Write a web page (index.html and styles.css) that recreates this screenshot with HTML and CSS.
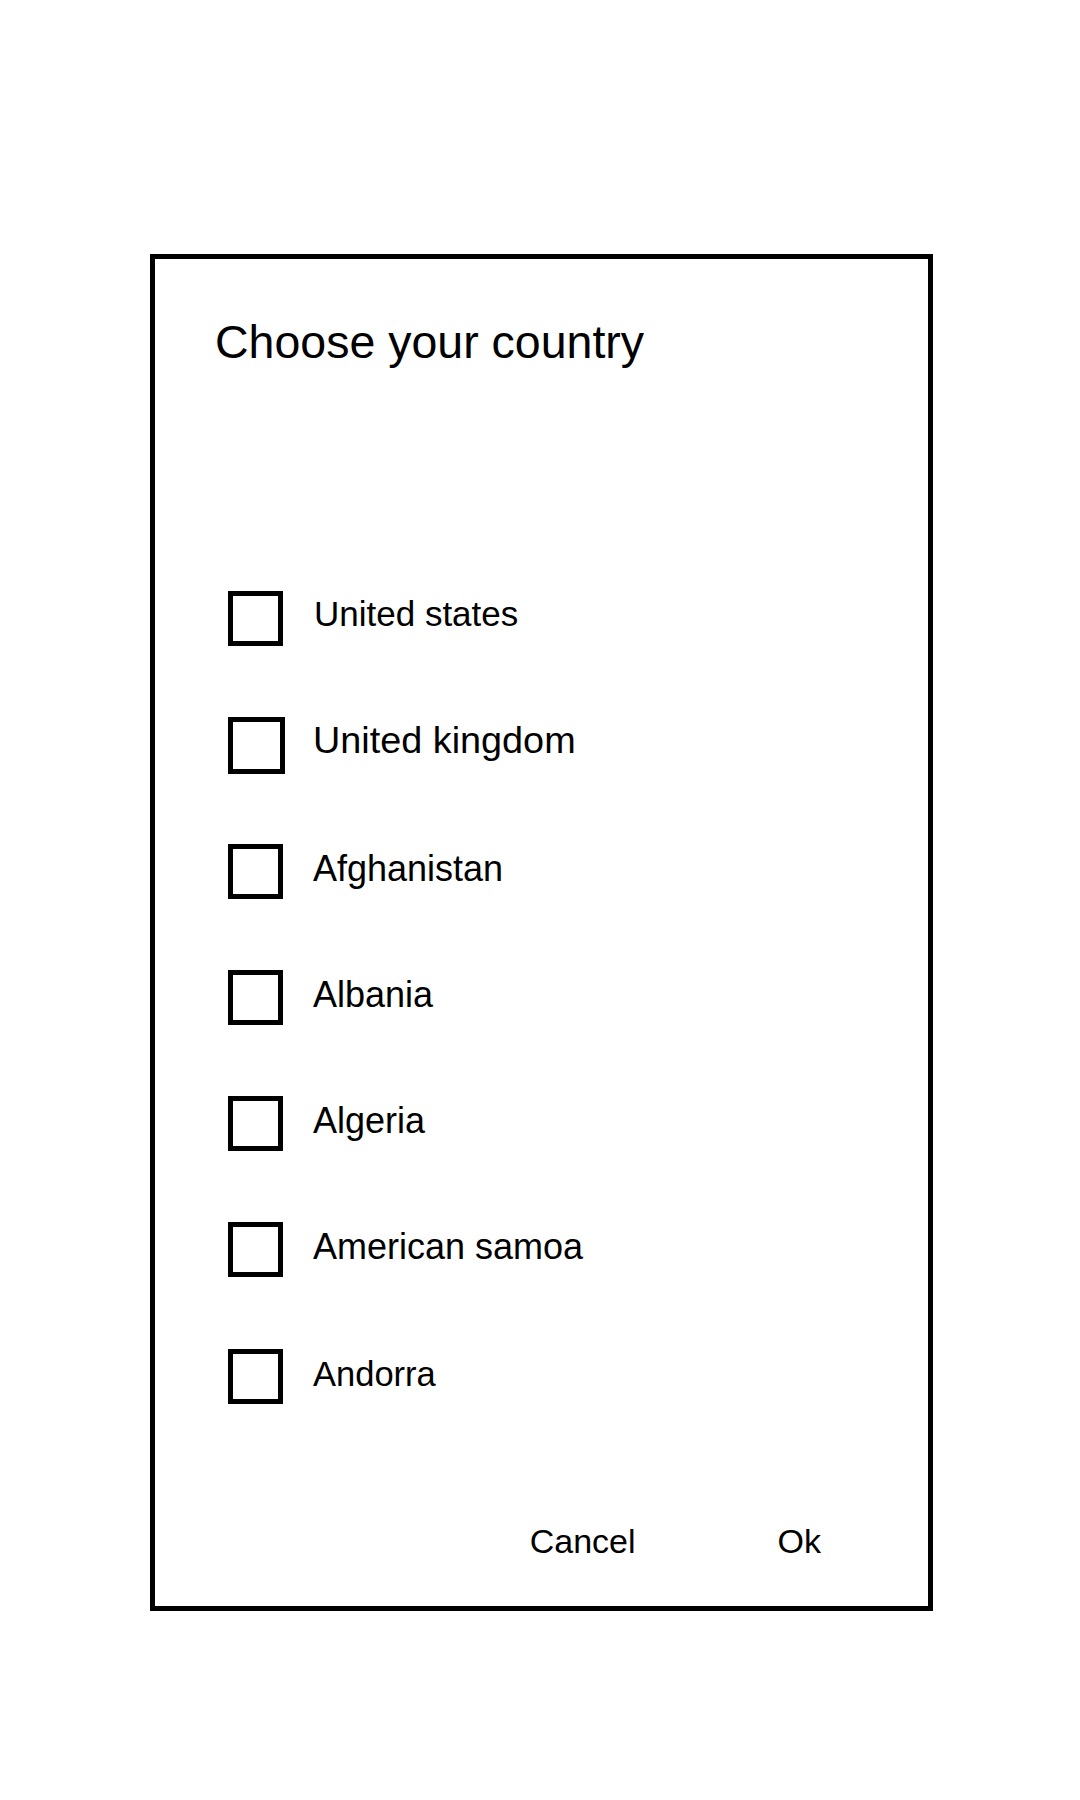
FILE: index.html
```html
<!DOCTYPE html>
<html lang="en">
<head>
<meta charset="utf-8">
<title>Choose your country</title>
<link rel="stylesheet" href="styles.css">
</head>
<body>
<div class="dialog">
  <h1 class="title">Choose your country</h1>
  <ul class="options">
    <li class="option"><span class="box"></span><span class="label label-sm">United states</span></li>
    <li class="option"><span class="box box-lg"></span><span class="label label-lg">United kingdom</span></li>
    <li class="option"><span class="box"></span><span class="label">Afghanistan</span></li>
    <li class="option"><span class="box"></span><span class="label">Albania</span></li>
    <li class="option"><span class="box"></span><span class="label">Algeria</span></li>
    <li class="option"><span class="box"></span><span class="label">American samoa</span></li>
    <li class="option"><span class="box"></span><span class="label label-xs">Andorra</span></li>
  </ul>
  <div class="actions">
    <span class="btn btn-cancel">Cancel</span>
    <span class="btn btn-ok">Ok</span>
  </div>
</div>
</body>
</html>
```

FILE: styles.css
```css
html, body {
  margin: 0;
  padding: 0;
  background: #fff;
}
body {
  font-family: "Liberation Sans", Arial, sans-serif;
  color: #000;
  width: 1080px;
  height: 1800px;
}
.dialog {
  box-sizing: border-box;
  margin: 254px 0 0 150px;
  width: 783px;
  height: 1357px;
  border: 5px solid #000;
  padding: 60px 0 48px 60px;
  display: flex;
  flex-direction: column;
}
.title {
  margin: 0;
  font-size: 46.5px;
  font-weight: normal;
  line-height: 46px;
}
.options {
  list-style: none;
  margin: 226px 0 0 0;
  padding: 0 0 0 13px;
}
.option {
  display: flex;
  align-items: flex-start;
  height: 126.25px;
}
.box {
  box-sizing: border-box;
  width: 55px;
  height: 55px;
  border: 5px solid #000;
  flex: none;
}
.box-lg {
  width: 57px;
  height: 57px;
}
.label {
  margin: 7px 0 0 30px;
  font-size: 36px;
  line-height: 1;
}
.box-lg + .label {
  margin-left: 28px;
  margin-top: 5px;
}
.label-sm {
  font-size: 35px;
  margin-left: 31px;
  margin-top: 5px;
}
.label-xs {
  font-size: 34.5px;
  margin-top: 8px;
}
.label-lg {
  font-size: 37.8px;
}
.actions {
  margin-top: auto;
  display: flex;
  justify-content: flex-end;
  padding-right: 107px;
}
.btn {
  font-size: 34px;
  line-height: 1;
}
.btn-ok {
  margin-left: 142px;
}
```
